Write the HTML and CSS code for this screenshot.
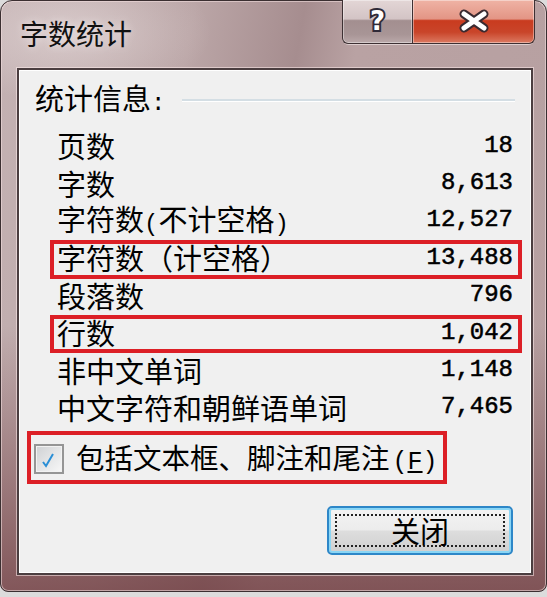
FILE: index.html
```html
<!DOCTYPE html>
<html lang="zh-CN">
<head>
<meta charset="utf-8">
<title>字数统计</title>
<link rel="stylesheet" href="styles.css">
</head>
<body>
<div class="window">
  <div class="titlebar">
    <div class="title">字数统计</div>
    <div class="caption-btns">
      <div class="cbtn help"><span class="q">?</span></div>
      <div class="cbtn close">
        <svg class="xicon" width="34" height="24" viewBox="0 0 34 24">
          <path d="M7 5 L27 19 M27 5 L7 19" stroke="#3a2a30" stroke-width="9" stroke-linecap="round"/>
          <path d="M7 5 L27 19 M27 5 L7 19" stroke="#ffffff" stroke-width="5" stroke-linecap="round"/>
        </svg>
      </div>
    </div>
  </div>
  <div class="client">
    <div class="group-head">
      <span class="group-label">统计信息<span class="hw">:</span></span>
      <span class="group-line"></span>
    </div>
    <div class="stats">
      <div class="row"><span class="name">页数</span><span class="num">18</span></div>
      <div class="row"><span class="name">字数</span><span class="num">8,613</span></div>
      <div class="row"><span class="name">字符数<span class="hw">(</span>不计空格<span class="hw">)</span></span><span class="num">12,527</span></div>
      <div class="row hl"><span class="name">字符数（计空格）</span><span class="num">13,488</span></div>
      <div class="row"><span class="name">段落数</span><span class="num">796</span></div>
      <div class="row hl"><span class="name">行数</span><span class="num">1,042</span></div>
      <div class="row"><span class="name">非中文单词</span><span class="num">1,148</span></div>
      <div class="row"><span class="name">中文字符和朝鲜语单词</span><span class="num">7,465</span></div>
    </div>
    <div class="check-row">
      <span class="checkbox">
        <svg width="26" height="26" viewBox="0 0 26 26"><path d="M7 16 L10 20 L17 8" fill="none" stroke="#2b8fd6" stroke-width="2"/></svg>
      </span>
      <span class="check-text">包括文本框、脚注和尾注<span class="hw key">(<u>F</u>)</span></span>
    </div>
    <div class="actions">
      <div class="btn"><span class="focus">关闭</span></div>
    </div>
  </div>
</div>
</body>
</html>
```
FILE: styles.css
```css
html, body {
  margin: 0;
  padding: 0;
}
body {
  width: 547px;
  height: 597px;
  overflow: hidden;
  background: #dcdcdc;
  font-family: "Noto Sans CJK SC", sans-serif;
  color: #000;
}
.window {
  box-sizing: border-box;
  width: 547px;
  height: 592px;
  border: 1px solid #3b2f31;
  border-radius: 12px 12px 8px 8px;
  padding: 0 13px 16px 16px;
  display: flex;
  flex-direction: column;
  background:
    linear-gradient(to bottom, rgba(110, 58, 62, 0) 55%, rgba(110, 58, 62, 0.75) 100%),
    radial-gradient(ellipse 140px 70px at 70px 32px, rgba(235, 225, 225, 0.55), rgba(235, 225, 225, 0)),
    linear-gradient(100deg, #c4b2b3 0%, #bba6a7 30%, #a68d8f 47%, #b9a2a3 56%, #b7a0a1 100%);
  box-shadow: inset 0 0 0 1px rgba(240, 220, 220, 0.6);
}
.titlebar {
  height: 67px;
  display: flex;
  align-items: flex-start;
  flex: none;
}
.title {
  margin: 18px 0 0 3px;
  font-size: 28px;
  line-height: 28px;
  color: #111;
  text-shadow: 0 0 8px rgba(255, 250, 250, 0.7);
}
.caption-btns {
  margin: -1px -2px 0 auto;
  display: flex;
  border-radius: 0 0 7px 7px;
  box-shadow: 0 1px 0 rgba(255, 245, 245, 0.55);
}
.cbtn {
  box-sizing: border-box;
  height: 44px;
  border: 1px solid #3d3033;
  border-top: none;
  display: flex;
  align-items: center;
  justify-content: center;
  box-shadow: inset 0 0 0 1px rgba(255, 255, 255, 0.4);
}
.help {
  width: 70px;
  border-right: none;
  border-radius: 0 0 0 6px;
  background: linear-gradient(to bottom, #e3d6d6 0%, #d3c4c5 44%, #a38f90 48%, #a89596 80%, #bba9aa 100%);
}
.close {
  width: 123px;
  border-radius: 0 0 6px 0;
  background: linear-gradient(to bottom, #efb3a5 0%, #e39585 44%, #c93b1f 48%, #c9452a 75%, #dc7a62 100%);
}
.q {
  font-family: "DejaVu Sans", sans-serif;
  font-weight: bold;
  font-size: 26px;
  line-height: 26px;
  color: #fff;
  -webkit-text-stroke: 4px #2f2a38;
  paint-order: stroke fill;
  margin-top: -2px;
}
.xicon {
  display: block;
  margin-top: -2px;
}
.client {
  flex: 1;
  box-sizing: border-box;
  border: 2px solid #4b3e40;
  background: #f0f0f0;
  box-shadow: inset 0 0 0 1px #ffffff, 0 0 0 1px rgba(255, 236, 236, 0.55);
  padding: 12px 16px 17px 16px;
  display: flex;
  flex-direction: column;
}
.hw {
  font-family: "Liberation Mono", monospace;
  font-size: 24px;
}
.group-head {
  display: flex;
  align-items: center;
  height: 37px;
  font-size: 29px;
  line-height: 37px;
}
.group-label {
  white-space: nowrap;
}
.group-line {
  flex: 1;
  height: 2px;
  margin-left: 17px;
  background: #d4dee4;
  border-bottom: 1px solid #ffffff;
}
.stats {
  margin: 8px -7px 0 15px;
}
.row {
  display: flex;
  justify-content: space-between;
  align-items: center;
  height: 37.4px;
  padding: 0 9px 0 7px;
  font-size: 29px;
  line-height: 1;
  white-space: nowrap;
}
.num {
  font-family: "Liberation Mono", monospace;
  font-size: 24px;
  -webkit-text-stroke: 0.5px #000;
}
.hl {
  position: relative;
}
.hl::after {
  content: "";
  position: absolute;
  left: 0;
  right: 0;
  top: 1px;
  bottom: -2px;
  border: 4px solid #dc1f26;
}
.check-row {
  box-sizing: border-box;
  display: flex;
  align-items: center;
  gap: 12px;
  width: 420px;
  height: 53px;
  margin: 5px 0 0 -8px;
  padding: 3px 0 0 3px;
  border: 4px solid #dc1f26;
}
.checkbox {
  box-sizing: border-box;
  width: 30px;
  height: 30px;
  flex: none;
  border: 2px solid #959595;
  background: linear-gradient(135deg, #cfd1d4 0%, #e6e7e8 55%, #f7f7f7 100%);
  box-shadow: inset 0 0 0 1px #f2f2f2;
}
.checkbox svg {
  display: block;
}
.check-text {
  font-size: 28.5px;
  line-height: 1;
  white-space: nowrap;
}
.key {
  font-size: 25px;
  margin-left: 3px;
}
.actions {
  display: flex;
  justify-content: flex-end;
  margin: 22px 2px 0 0;
}
.btn {
  box-sizing: border-box;
  width: 186px;
  height: 49px;
  border: 2px solid #2d87c8;
  border-radius: 5px;
  box-shadow: inset 0 0 0 2px #8ad6f5;
  background: linear-gradient(to bottom, #f4f4f4 0%, #ececec 48%, #dddddd 52%, #cfcfcf 100%);
  padding: 6px;
  font-size: 29px;
}
.focus {
  box-sizing: border-box;
  display: flex;
  align-items: center;
  justify-content: center;
  height: 100%;
  border: 2px dotted #222;
  line-height: 1;
}
```
